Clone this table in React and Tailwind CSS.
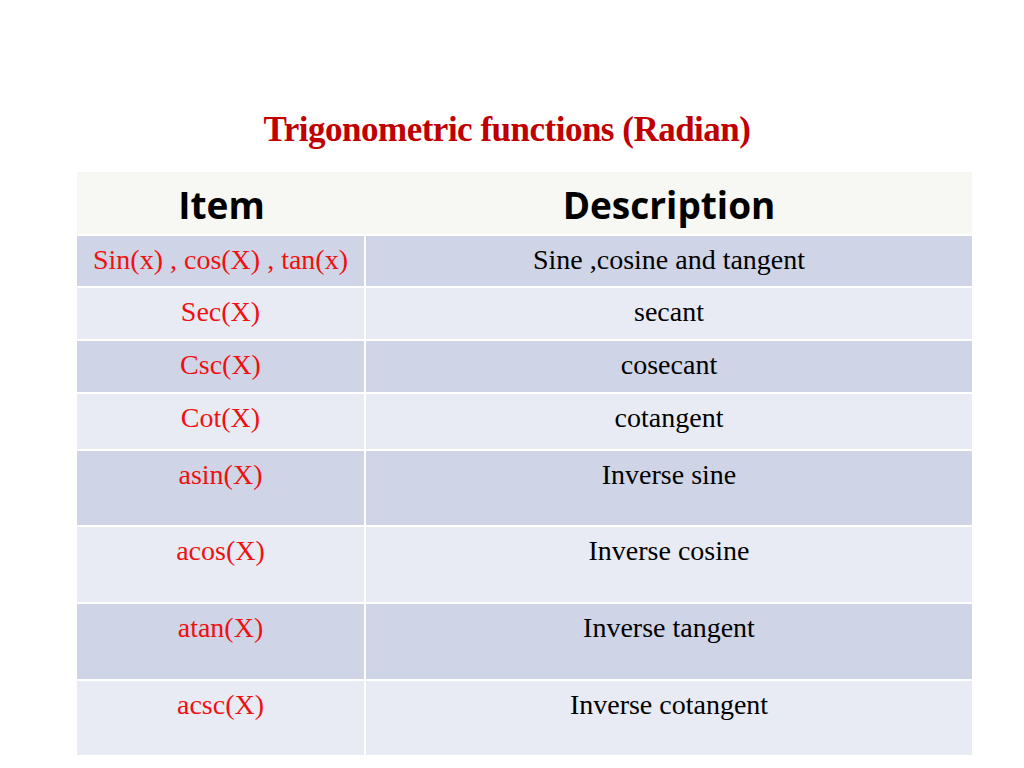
const rows = [
  { item: 'Sin(x) , cos(X) , tan(x)', desc: 'Sine ,cosine and tangent', h: 'h-[52px]' },
  { item: 'Sec(X)', desc: 'secant', h: 'h-[53px]' },
  { item: 'Csc(X)', desc: 'cosecant', h: 'h-[53px]' },
  { item: 'Cot(X)', desc: 'cotangent', h: 'h-[57px]' },
  { item: 'asin(X)', desc: 'Inverse sine', h: 'h-[76px]' },
  { item: 'acos(X)', desc: 'Inverse cosine', h: 'h-[77px]' },
  { item: 'atan(X)', desc: 'Inverse tangent', h: 'h-[77px]' },
  { item: 'acsc(X)', desc: 'Inverse cotangent', h: 'h-[76px]' },
];

export default function App() {
  return (
    <div className="w-[1024px] h-[768px] bg-white overflow-hidden font-['Liberation_Serif',serif]">
      <h1 className="pt-[110px] pr-[10px] text-center text-[35px] leading-[40px] font-bold text-[#c00000] tracking-[-0.5px]">
        Trigonometric functions (Radian)
      </h1>

      <div className="mt-[22px] ml-[77px] w-[895px]">
        <div className="flex h-[64px] bg-[#f7f7f4] border-b-2 border-white">
          <div className="w-[289px] flex items-center justify-center pt-[3px] text-[37px] font-bold text-black font-['Open_Sans',sans-serif]">
            Item
          </div>
          <div className="flex-1 flex items-center justify-center pt-[3px] text-[37px] font-bold text-black font-['Open_Sans',sans-serif]">
            Description
          </div>
        </div>

        {rows.map((r, i) => (
          <div
            key={r.item}
            className={`flex ${r.h} border-b-2 border-white ${i % 2 === 0 ? 'bg-[#cfd5e6]' : 'bg-[#e8ebf3]'}`}
          >
            <div className="w-[289px] border-r-2 border-white pt-[9px] text-center text-[28px] leading-[30px] text-[#f01010] whitespace-nowrap">
              {r.item}
            </div>
            <div className="flex-1 pt-[9px] text-center text-[28px] leading-[30px] text-black">
              {r.desc}
            </div>
          </div>
        ))}
      </div>
    </div>
  );
}
